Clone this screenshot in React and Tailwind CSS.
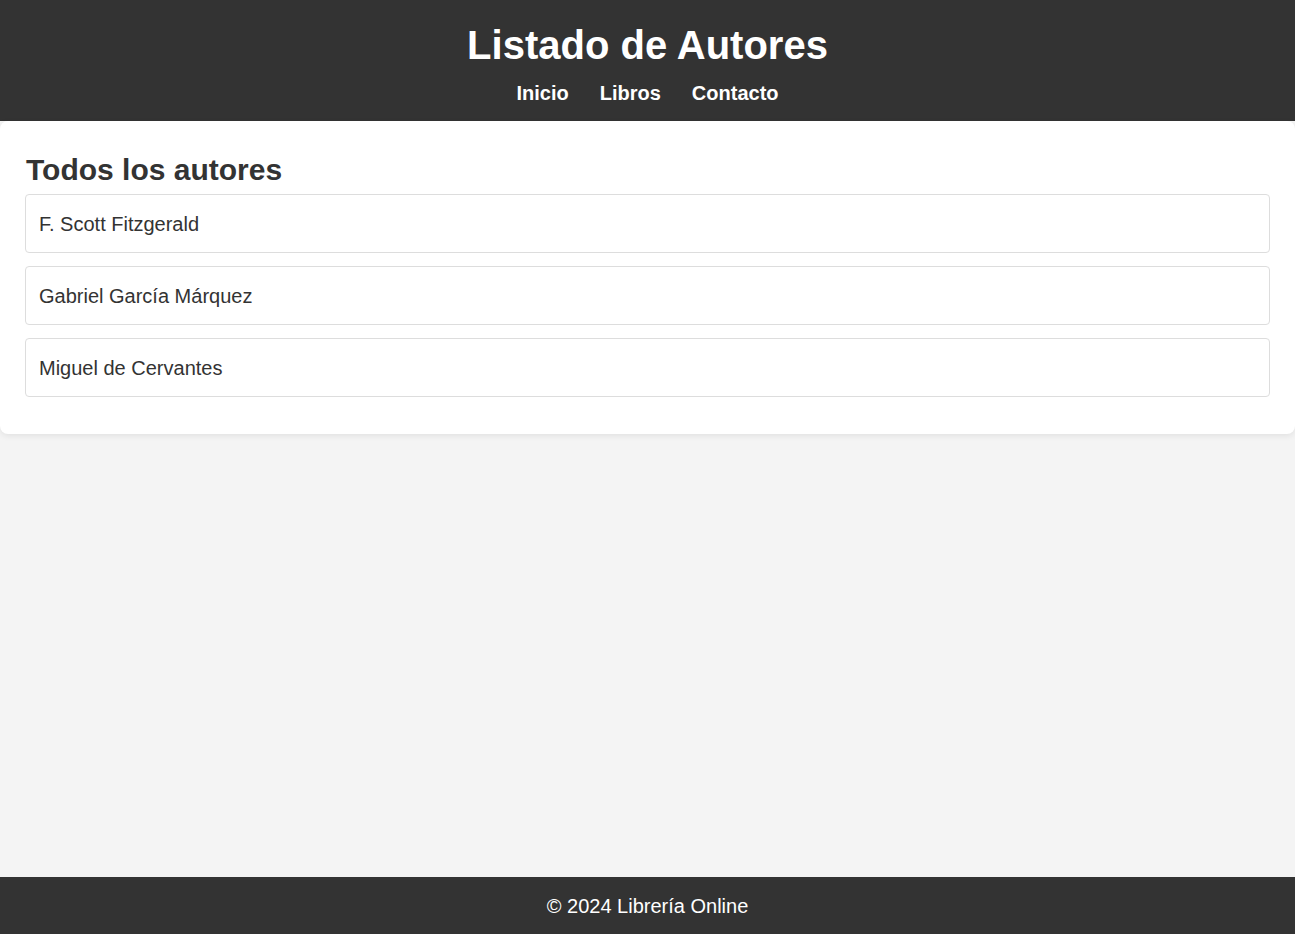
const AUTORES = ["F. Scott Fitzgerald", "Gabriel García Márquez", "Miguel de Cervantes"];

const NAV = ["Inicio", "Libros", "Contacto"];

export default function App() {
  return (
    <div
      className="flex min-h-[934px] flex-col bg-[#f4f4f4] text-[#333]"
      style={{ fontFamily: '"Liberation Sans", Arial, sans-serif' }}
    >
      {/* Header */}
      <header className="flex h-[121px] flex-col items-center bg-[#333] pt-[22px] text-white">
        <h1 className="text-[40px] leading-[46px] font-bold">Listado de Autores</h1>
        <nav className="mt-[14px] flex gap-[31px]">
          {NAV.map((item) => (
            <a key={item} href="#" className="text-[20px] leading-[23px] font-bold text-white">
              {item}
            </a>
          ))}
        </nav>
      </header>

      {/* Content */}
      <main className="rounded-lg bg-white px-[25px] pt-[32px] pb-[37px] shadow-[0_2px_6px_rgba(0,0,0,0.08)]">
        <h2 className="mb-[7px] pl-px text-[30px] leading-[34px] font-bold">Todos los autores</h2>
        <ul className="flex flex-col gap-[13px]">
          {AUTORES.map((nombre) => (
            <li
              key={nombre}
              className="flex h-[59px] items-center rounded-[4px] border border-[#ddd] px-[13px] text-[20px]"
            >
              {nombre}
            </li>
          ))}
        </ul>
      </main>

      <div className="flex-1" />

      {/* Footer */}
      <footer className="flex h-[57px] items-center justify-center bg-[#333] text-[20px] text-white">
        © 2024 Librería Online
      </footer>
    </div>
  );
}
